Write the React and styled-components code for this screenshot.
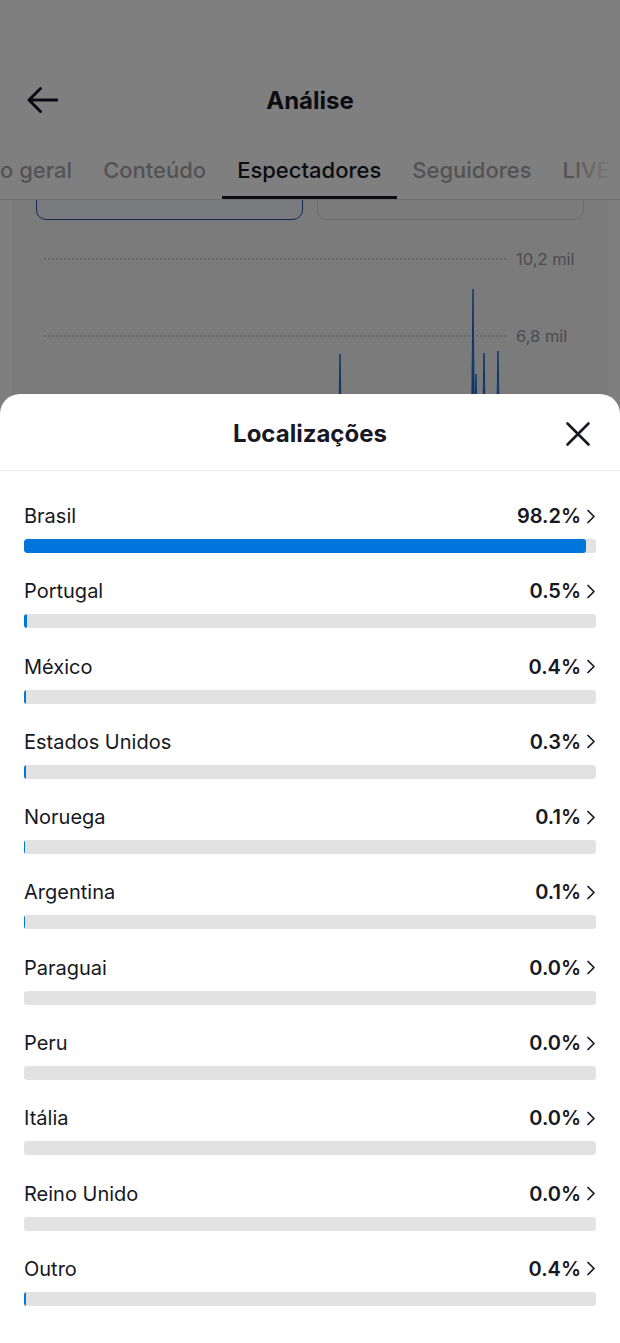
import React from 'react';
import styled, { createGlobalStyle } from 'styled-components';

const GlobalStyle = createGlobalStyle`
  body {
    margin: 0;
    font-family: Inter, Roboto, "Liberation Sans", Arial, sans-serif;
    color: #161823;
    background: #ffffff;
  }
`;

// Dados de localização dos espectadores
const locations = [
  { name: 'Brasil', pct: 98.2 },
  { name: 'Portugal', pct: 0.5 },
  { name: 'México', pct: 0.4 },
  { name: 'Estados Unidos', pct: 0.3 },
  { name: 'Noruega', pct: 0.1 },
  { name: 'Argentina', pct: 0.1 },
  { name: 'Paraguai', pct: 0.0 },
  { name: 'Peru', pct: 0.0 },
  { name: 'Itália', pct: 0.0 },
  { name: 'Reino Unido', pct: 0.0 },
  { name: 'Outro', pct: 0.4 }
];

const tabs = ['Visão geral', 'Conteúdo', 'Espectadores', 'Seguidores', 'LIVE'];

// Picos do gráfico (x, topo) em coordenadas do svg
const spikes = [
  [296, 125],
  [429, 60],
  [432, 145],
  [440, 124],
  [454, 122]
];

const BackIcon = () => (
  <svg width="32" height="28" viewBox="0 0 32 28" fill="none">
    <path d="M31 14H3M14.5 2.5L3 14l11.5 11.5" stroke="#161823" strokeWidth="3" strokeLinecap="round" strokeLinejoin="round" />
  </svg>
);

const CloseIcon = () => (
  <svg width="26" height="26" viewBox="0 0 26 26" fill="none">
    <path d="M2.5 2.5l21 21M23.5 2.5l-21 21" stroke="#161823" strokeWidth="2.6" strokeLinecap="round" />
  </svg>
);

const Chevron = () => (
  <svg width="10" height="15" viewBox="0 0 10 15" fill="none">
    <path d="M2 1.5l6 6-6 6" stroke="#161823" strokeWidth="1.7" strokeLinecap="round" strokeLinejoin="round" />
  </svg>
);

const App = () => {
  return (
    <>
      <GlobalStyle />
      <Page>
        {/* Página de fundo: Análise */}
        <TopBar>
          <BackButton><BackIcon /></BackButton>
          <PageTitle>Análise</PageTitle>
          <span />
        </TopBar>

        <TabBar>
          <TabStrip>
            {tabs.map(tab => (
              <Tab key={tab} $active={tab === 'Espectadores'}>{tab}</Tab>
            ))}
          </TabStrip>
        </TabBar>

        <Panel>
          <CardRow>
            <MetricCard $selected />
            <MetricCard />
          </CardRow>

          <Chart>
            <Plot width="464" height="200" viewBox="0 0 464 200">
              {[30, 107, 184].map(y => (
                <line key={y} x1="0" x2="464" y1={y} y2={y} stroke="#a9a9a9" strokeWidth="1" strokeDasharray="2 2" />
              ))}
              {spikes.map(([x, top]) => (
                <path
                  key={x}
                  d={`M${x - 1.5} 200 L${x} ${top} L${x + 1.5} 200`}
                  fill="#1b6fd6"
                  stroke="#1b6fd6"
                  strokeWidth="1"
                />
              ))}
            </Plot>
            <Axis>
              <AxisLabel>10,2 mil</AxisLabel>
              <AxisLabel>6,8 mil</AxisLabel>
              <AxisLabel>3,4 mil</AxisLabel>
            </Axis>
          </Chart>
        </Panel>

        <Dim />

        {/* Folha inferior: Localizações */}
        <Sheet>
          <SheetHeader>
            <SheetTitle>Localizações</SheetTitle>
            <CloseButton><CloseIcon /></CloseButton>
          </SheetHeader>

          <LocationList>
            {locations.map(loc => (
              <LocationRow key={loc.name}>
                <RowTop>
                  <Country>{loc.name}</Country>
                  <Value>
                    <Percent>{loc.pct.toFixed(1)}%</Percent>
                    <Chevron />
                  </Value>
                </RowTop>
                <Bar>
                  <Fill style={{ width: `${loc.pct}%` }} />
                </Bar>
              </LocationRow>
            ))}
          </LocationList>
        </Sheet>
      </Page>
    </>
  );
};

const Page = styled.div`
  position: relative;
  width: 620px;
  height: 1343px;
  overflow: hidden;
  background: #ffffff;
  padding-top: 60px;
  box-sizing: border-box;
`;

const TopBar = styled.div`
  display: grid;
  grid-template-columns: 1fr auto 1fr;
  align-items: center;
  height: 80px;
  padding: 0 26px;
`;

const BackButton = styled.div`
  display: flex;
  align-items: center;
`;

const PageTitle = styled.h1`
  margin: 0;
  font-size: 24px;
  font-weight: 700;
  color: #161823;
`;

const TabBar = styled.div`
  position: relative;
  height: 59px;
  border-bottom: 1px solid #e3e3e4;
  overflow: hidden;

  &::after {
    content: "";
    position: absolute;
    top: 0;
    right: 0;
    width: 50px;
    height: 100%;
    background: linear-gradient(90deg, rgba(255, 255, 255, 0) 0%, #ffffff 90%);
  }
`;

const TabStrip = styled.div`
  display: flex;
  height: 100%;
  margin-left: -61px;
  white-space: nowrap;
`;

const Tab = styled.div`
  display: flex;
  align-items: center;
  padding: 0 15.5px;
  font-size: 22px;
  font-weight: 500;
  color: ${p => (p.$active ? '#161823' : '#a6a6a9')};
  box-shadow: ${p => (p.$active ? 'inset 0 -3px 0 #161823' : 'none')};
`;

const Panel = styled.div`
  margin: 0 12px;
  height: 300px;
  background: #f7f7f8;
  padding: 0 24px;
  overflow: hidden;
`;

const CardRow = styled.div`
  display: grid;
  grid-template-columns: 1fr 1fr;
  gap: 14px;
  margin-top: -40px;
`;

const MetricCard = styled.div`
  height: 60px;
  border-radius: 10px;
  box-sizing: border-box;
  background: ${p => (p.$selected ? '#f2f6fd' : '#f7f7f8')};
  border: ${p => (p.$selected ? '1.5px solid #2a4fa8' : '1px solid #dadadc')};
`;

const Chart = styled.div`
  display: flex;
  margin-top: 9px;
  padding-left: 8px;
`;

const Plot = styled.svg`
  display: block;
  flex: none;
`;

const Axis = styled.div`
  display: flex;
  flex-direction: column;
  gap: 57px;
  padding-top: 20px;
  padding-left: 8px;
`;

const AxisLabel = styled.div`
  height: 20px;
  line-height: 20px;
  font-size: 16.5px;
  color: #96969a;
  white-space: nowrap;
`;

const Dim = styled.div`
  position: absolute;
  inset: 0;
  background: rgba(0, 0, 0, 0.5);
`;

const Sheet = styled.div`
  position: absolute;
  top: 394px;
  left: 0;
  right: 0;
  bottom: 0;
  background: #ffffff;
  border-radius: 20px 20px 0 0;
`;

const SheetHeader = styled.div`
  position: relative;
  display: flex;
  align-items: center;
  justify-content: center;
  height: 77px;
  padding-top: 2px;
  box-sizing: border-box;
  border-bottom: 1px solid #ececec;
`;

const SheetTitle = styled.h2`
  margin: 0;
  font-size: 24px;
  font-weight: 700;
  color: #161823;
`;

const CloseButton = styled.div`
  position: absolute;
  right: 29px;
  top: 27px;
  display: flex;
`;

const LocationList = styled.div`
  display: flex;
  flex-direction: column;
  padding: 33px 24px 0;
`;

const LocationRow = styled.div`
  display: flex;
  flex-direction: column;
  height: 75.3px;
`;

const RowTop = styled.div`
  display: flex;
  align-items: center;
  justify-content: space-between;
  height: 24px;
`;

const Country = styled.span`
  font-size: 20px;
  color: #161823;
`;

const Value = styled.div`
  display: flex;
  align-items: center;
  gap: 5px;
`;

const Percent = styled.span`
  font-size: 20px;
  font-weight: 600;
  color: #161823;
`;

const Bar = styled.div`
  margin-top: 11px;
  height: 14px;
  border-radius: 3px;
  background: #e2e2e3;
  overflow: hidden;
`;

const Fill = styled.div`
  height: 100%;
  border-radius: 3px;
  background: #0075db;
`;

export default App;
